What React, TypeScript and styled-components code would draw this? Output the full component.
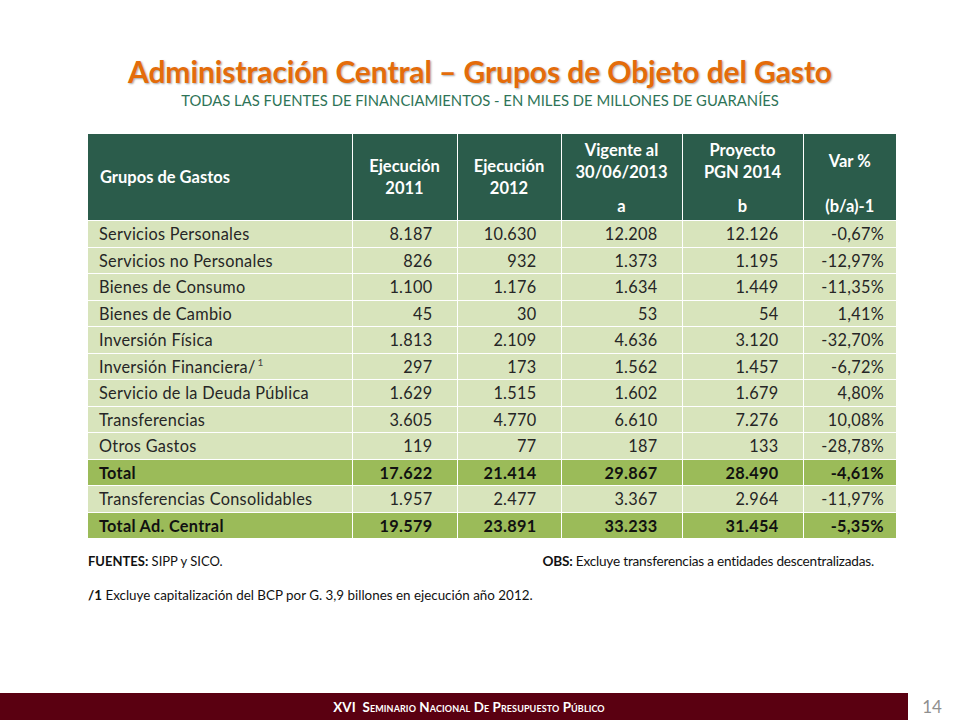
import React from "react";
import styled, { createGlobalStyle } from "styled-components";

const Global = createGlobalStyle`
  html, body { margin: 0; padding: 0; background: #fff; }
  body { font-family: Lato, "Liberation Sans", sans-serif; }
`;

const Page = styled.div`
  width: 960px;
  height: 720px;
  display: flex;
  flex-direction: column;
  align-items: center;
  position: relative;
  overflow: hidden;
`;

const Title = styled.h1`
  margin: 54px 0 0;
  font-family: Lato, "Liberation Sans", sans-serif;
  font-size: 30px;
  font-weight: 700;
  color: #e46c0a;
  text-shadow: 1px 1px 2px rgba(0, 0, 0, 0.35);
  line-height: 34px;
  letter-spacing: -0.1px;
`;

const Subtitle = styled.div`
  padding-top: 2px;
  font-size: 14.8px;
  line-height: 20px;
  color: #2e7457;
`;

const Table = styled.table`
  margin-top: 24px;
  margin-left: 24px;
  border-collapse: collapse;
  width: 808px;
  table-layout: fixed;
  font-size: 16.3px;
`;

const HeadCell = styled.th<{ $align?: string }>`
  background: #2b5c4b;
  color: #fff;
  font-weight: 700;
  font-size: 16.5px;
  line-height: 22px;
  border-left: 1px solid #fff;
  border-right: 1px solid #fff;
  text-align: ${(p) => p.$align || "center"};
  padding: ${(p) => (p.$align === "left" ? "0 12px" : "0 4px")};
  height: 86px;
  vertical-align: middle;
  white-space: nowrap;
  &:first-child { border-left: none; }
  &:last-child { border-right: none; }
`;

const HeadStack = styled.div`
  height: 86px;
  display: flex;
  flex-direction: column;
  justify-content: space-between;
  padding: 5px 0 3px;
  box-sizing: border-box;
`;

const HeadTop = styled.div<{ $pad?: number }>`
  padding-top: ${(p) => p.$pad || 0}px;
`;

const Row = styled.tr<{ $total?: boolean }>`
  height: 26.5px;
  background: ${(p) => (p.$total ? "#9bbb59" : "#d8e4bc")};
  color: ${(p) => (p.$total ? "#111" : "#262626")};
  font-weight: ${(p) => (p.$total ? 700 : 400)};
`;

const Cell = styled.td<{ $label?: boolean; $last?: boolean }>`
  border: 1px solid #fff;
  padding: ${(p) => (p.$label ? "0 6px 0 11px" : p.$last ? "0 12px 0 2px" : "0 24px 0 2px")};
  text-align: ${(p) => (p.$label ? "left" : "right")};
  white-space: nowrap;
  letter-spacing: 0.3px;
  &:first-child { border-left: none; }
  &:last-child { border-right: none; }
`;

const Sup = styled.sup`
  font-size: 10px;
  vertical-align: 7px;
  margin-left: 2px;
  color: #444;
`;

const Notes = styled.div`
  width: 808px;
  margin-left: 24px;
  margin-top: 14px;
  font-size: 13px;
  color: #111;
  display: flex;
  flex-direction: column;
  gap: 18px;
`;

const NoteLine = styled.div`
  display: flex;
  justify-content: space-between;
  padding-right: 22px;
`;

const NoteObs = styled.span`
  font-size: 13.6px;
  letter-spacing: -0.2px;
`;

const NoteFoot = styled.div`
  font-size: 13.4px;
`;

const B = styled.b`
  font-weight: 700;
`;

const Footer = styled.div`
  position: absolute;
  left: 0;
  bottom: 0;
  width: 960px;
  height: 27px;
  display: flex;
  align-items: center;
`;

const FooterBar = styled.div`
  width: 908px;
  height: 27px;
  box-sizing: border-box;
  padding-left: 30px;
  background: #5a0011;
  color: #fff;
  display: flex;
  align-items: center;
  justify-content: center;
  font-size: 13.4px;
  font-weight: 700;
  font-variant: small-caps;
  letter-spacing: 0.1px;
`;

const PageNum = styled.div`
  flex: 1;
  text-align: center;
  color: #8f8f8f;
  font-size: 17px;
  font-weight: 400;
  padding-right: 4px;
`;

type R = { label: React.ReactNode; v: string[]; total?: boolean };

const rows: R[] = [
  { label: "Servicios Personales", v: ["8.187", "10.630", "12.208", "12.126", "-0,67%"] },
  { label: "Servicios no Personales", v: ["826", "932", "1.373", "1.195", "-12,97%"] },
  { label: "Bienes de Consumo", v: ["1.100", "1.176", "1.634", "1.449", "-11,35%"] },
  { label: "Bienes de Cambio", v: ["45", "30", "53", "54", "1,41%"] },
  { label: "Inversión Física", v: ["1.813", "2.109", "4.636", "3.120", "-32,70%"] },
  {
    label: (
      <>
        Inversión Financiera/<Sup>1</Sup>
      </>
    ),
    v: ["297", "173", "1.562", "1.457", "-6,72%"],
  },
  { label: "Servicio de la Deuda Pública", v: ["1.629", "1.515", "1.602", "1.679", "4,80%"] },
  { label: "Transferencias", v: ["3.605", "4.770", "6.610", "7.276", "10,08%"] },
  { label: "Otros Gastos", v: ["119", "77", "187", "133", "-28,78%"] },
  { label: "Total", v: ["17.622", "21.414", "29.867", "28.490", "-4,61%"], total: true },
  { label: "Transferencias Consolidables", v: ["1.957", "2.477", "3.367", "2.964", "-11,97%"] },
  { label: "Total Ad. Central", v: ["19.579", "23.891", "33.233", "31.454", "-5,35%"], total: true },
];

export default function App() {
  return (
    <Page>
      <Global />
      <Title>Administración Central – Grupos de Objeto del Gasto</Title>
      <Subtitle>TODAS LAS FUENTES DE FINANCIAMIENTOS - EN MILES DE MILLONES DE GUARANÍES</Subtitle>
      <Table>
        <colgroup>
          <col style={{ width: 264 }} />
          <col style={{ width: 105 }} />
          <col style={{ width: 104 }} />
          <col style={{ width: 121 }} />
          <col style={{ width: 121 }} />
          <col style={{ width: 93 }} />
        </colgroup>
        <thead>
          <tr>
            <HeadCell $align="left">Grupos de Gastos</HeadCell>
            <HeadCell>
              Ejecución
              <br />
              2011
            </HeadCell>
            <HeadCell>
              Ejecución
              <br />
              2012
            </HeadCell>
            <HeadCell>
              <HeadStack>
                <HeadTop>
                  Vigente al
                  <br />
                  30/06/2013
                </HeadTop>
                <div>a</div>
              </HeadStack>
            </HeadCell>
            <HeadCell>
              <HeadStack>
                <HeadTop>
                  Proyecto
                  <br />
                  PGN 2014
                </HeadTop>
                <div>b</div>
              </HeadStack>
            </HeadCell>
            <HeadCell>
              <HeadStack>
                <HeadTop $pad={11}>Var %</HeadTop>
                <div>(b/a)-1</div>
              </HeadStack>
            </HeadCell>
          </tr>
        </thead>
        <tbody>
          {rows.map((r, i) => (
            <Row key={i} $total={r.total}>
              <Cell $label>{r.label}</Cell>
              {r.v.map((x, j) => (
                <Cell key={j} $last={j === r.v.length - 1}>
                  {x}
                </Cell>
              ))}
            </Row>
          ))}
        </tbody>
      </Table>
      <Notes>
        <NoteLine>
          <span>
            <B>FUENTES:</B> SIPP y SICO.
          </span>
          <NoteObs>
            <B>OBS:</B> Excluye transferencias a entidades descentralizadas.
          </NoteObs>
        </NoteLine>
        <NoteFoot>
          <B>/1</B> Excluye capitalización del BCP por G. 3,9 billones en ejecución año 2012.
        </NoteFoot>
      </Notes>
      <Footer>
        <FooterBar>XVI&nbsp; Seminario Nacional De Presupuesto Público</FooterBar>
        <PageNum>14</PageNum>
      </Footer>
    </Page>
  );
}
